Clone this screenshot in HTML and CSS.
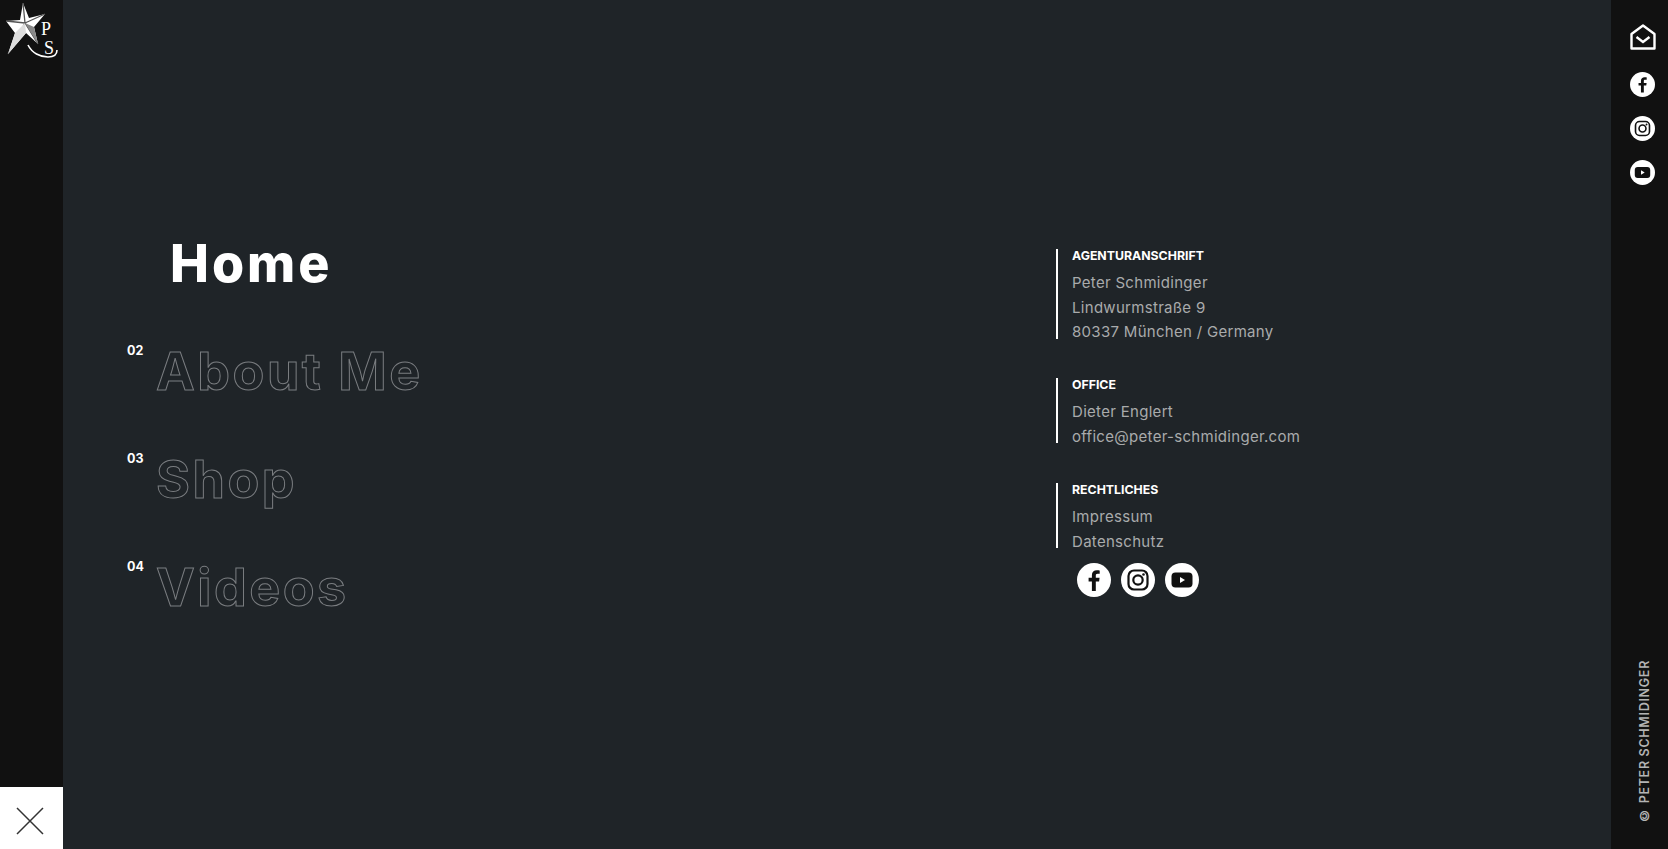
FILE: index.html
```html
<!DOCTYPE html>
<html lang="en">
  <head>
    <meta charset="UTF-8" />
    <meta name="viewport" content="width=device-width, initial-scale=1.0" />
    <title>Peter Schmidinger</title>
    <link rel="stylesheet" href="styles.css">
  </head>

  <body>
    <aside class="left-bar">
      <a class="logo" href="#">
        <svg width="60" height="60" viewBox="0 0 60 60">
          <polygon points="23,3 29,18 45,14 34,27 38,44 26,33 8,54 15,33 6,21 20,20" fill="#fff"/>
          <path d="M23 3l2 20M6 21l19 2M45 14L25 23M25 23L8 54M25 23l13 21" stroke="#555" stroke-width="1.300" fill="none"/>
          <polygon points="25,23 34,27 38,44" fill="#888"/>
          <polygon points="25,23 15,33 8,54 26,33" fill="#ddd"/>
          <text class="logo-letter" x="41" y="35">P</text>
          <text class="logo-letter" x="44" y="54">S</text>
          <path d="M28 45c4 8 12 12 20 12 6 0 9-3 9-7" fill="none" stroke="#fff" stroke-width="1.600"/>
        </svg>
      </a>
      <button class="close-btn">
        <svg width="28" height="28" viewBox="0 0 28 28">
          <path d="M1 1l26 26M27 1L1 27" stroke="#333" stroke-width="1.500" fill="none"/>
        </svg>
      </button>
    </aside>

    <main class="content">
      <nav class="menu">
        <a class="menu-item active" href="#"><span class="menu-text">Home</span></a>
        <a class="menu-item" href="#"><span class="menu-num">02</span><span class="menu-text">About Me</span></a>
        <a class="menu-item" href="#"><span class="menu-num">03</span><span class="menu-text">Shop</span></a>
        <a class="menu-item" href="#"><span class="menu-num">04</span><span class="menu-text">Videos</span></a>
      </nav>

      <section class="contact">
        <div class="contact-block">
          <h4>AGENTURANSCHRIFT</h4>
          <p>Peter Schmidinger</p>
          <p>Lindwurmstraße 9</p>
          <p>80337 München / Germany</p>
        </div>
        <div class="contact-block">
          <h4>OFFICE</h4>
          <p>Dieter Englert</p>
          <p>office@peter-schmidinger.com</p>
        </div>
        <div class="contact-block">
          <h4>RECHTLICHES</h4>
          <p>Impressum</p>
          <p>Datenschutz</p>
        </div>
        <div class="contact-social">
          <svg class="social-lg" viewBox="0 0 34 34"><use href="#ico-fb"/></svg>
          <svg class="social-lg" viewBox="0 0 34 34"><use href="#ico-ig"/></svg>
          <svg class="social-lg" viewBox="0 0 34 34"><use href="#ico-yt"/></svg>
        </div>
      </section>
    </main>

    <aside class="right-bar">
      <div class="right-icons">
        <svg class="mail" width="26" height="26" viewBox="0 0 26 26">
          <path d="M1.500 24.500V10L13 1.500 24.500 10V24.500Z" fill="none" stroke="#fff" stroke-width="2.400" stroke-linejoin="round"/>
          <path d="M6.500 13L13 18l6.500-5" fill="none" stroke="#fff" stroke-width="2.400"/>
        </svg>
        <svg class="social-sm" viewBox="0 0 34 34"><use href="#ico-fb"/></svg>
        <svg class="social-sm" viewBox="0 0 34 34"><use href="#ico-ig"/></svg>
        <svg class="social-sm" viewBox="0 0 34 34"><use href="#ico-yt"/></svg>
      </div>
      <span class="copyright">© PETER SCHMIDINGER</span>
    </aside>

    <svg class="icon-defs" width="0" height="0">
      <symbol id="ico-fb" viewBox="0 0 34 34">
        <circle cx="17" cy="17" r="17" fill="#fff"/>
        <path d="M18.800 28V18.500h3.300l.5-3.700h-3.800v-2.300c0-1.100.3-1.800 1.900-1.800h2V7.400c-.4 0-1.600-.2-2.900-.2-2.900 0-4.900 1.800-4.900 5v2.600h-3.300v3.700h3.300V28z" fill="#111"/>
      </symbol>
      <symbol id="ico-ig" viewBox="0 0 34 34">
        <circle cx="17" cy="17" r="17" fill="#fff"/>
        <rect x="7.500" y="7.500" width="19" height="19" rx="5.500" fill="none" stroke="#111" stroke-width="2.200"/>
        <circle cx="17" cy="17" r="4.700" fill="none" stroke="#111" stroke-width="2.200"/>
        <circle cx="22.500" cy="11.500" r="1.300" fill="#111"/>
      </symbol>
      <symbol id="ico-yt" viewBox="0 0 34 34">
        <circle cx="17" cy="17" r="17" fill="#fff"/>
        <rect x="6.500" y="9.500" width="21" height="15" rx="4" fill="#111"/>
        <path d="M15 14l5 3-5 3z" fill="#fff"/>
      </symbol>
    </svg>
  </body>
</html>
```

FILE: styles.css
```css
* {
  box-sizing: border-box;
}

html,
body {
  height: 100%;
}

body {
  display: flex;
  margin: 0;
  overflow: hidden;
  background: #1f2428;
  font-family: Inter, "Noto Sans", sans-serif;
}

.left-bar {
  display: flex;
  flex-direction: column;
  justify-content: space-between;
  flex: 0 0 63px;
  background: #111;
}

.logo {
  display: block;
  height: 60px;
}

.logo-letter {
  font-family: "Liberation Serif", serif;
  font-size: 18px;
  fill: #fff;
}

.close-btn {
  display: flex;
  align-items: center;
  justify-content: center;
  width: 63px;
  height: 62px;
  padding: 6px 3px 0 0;
  border: 0;
  background: #fff;
}

.content {
  display: flex;
  flex: 1;
  padding-top: 249px;
}

.menu {
  display: flex;
  flex-direction: column;
  flex: 0 0 993px;
  padding-left: 64px;
}

.menu-item {
  display: flex;
  align-items: flex-start;
  height: 108px;
  color: #fff;
  text-decoration: none;
}

.menu-item.active {
  height: 108px;
  margin-top: -20px;
  padding-left: 43px;
}

.menu-num {
  flex: 0 0 29px;
  margin-top: 6px;
  font-size: 12.500px;
  font-weight: 700;
}

.menu-text {
  font-size: 52px;
  font-weight: 700;
  letter-spacing: 2.500px;
  line-height: 70px;
  color: transparent;
  -webkit-text-stroke: 1px #7a7d80;
}

.active .menu-text {
  color: #fff;
  -webkit-text-stroke: 0;
  font-weight: 800;
  letter-spacing: 3px;
}

.contact {
  display: flex;
  flex-direction: column;
}

.contact-block {
  height: 90px;
  margin-bottom: 39px;
  padding-left: 14px;
  border-left: 2px solid #fff;
}

.contact-block:nth-child(2),
.contact-block:nth-child(3) {
  height: 65px;
}

.contact-block:nth-child(2) {
  margin-bottom: 40px;
}

.contact-block:nth-child(3) {
  margin-bottom: 15px;
}

.contact-block h4 {
  margin: 0 0 8px;
  font-size: 12.300px;
  font-weight: 700;
  line-height: 14px;
  color: #fff;
}

.contact-block p {
  margin: 0;
  font-size: 15px;
  line-height: 24.500px;
  letter-spacing: 0.300px;
  white-space: nowrap;
  color: #a9abac;
}

.contact-social {
  display: flex;
  gap: 10px;
  padding-left: 21px;
}

.social-lg {
  width: 34px;
  height: 34px;
}

.right-bar {
  display: flex;
  flex-direction: column;
  align-items: center;
  justify-content: space-between;
  flex: 0 0 57px;
  padding: 24px 0 26px 6px;
  background: #111;
}

.right-icons {
  display: flex;
  flex-direction: column;
  align-items: center;
  gap: 19px;
}

.social-sm {
  width: 25px;
  height: 25px;
}

.mail {
  margin-bottom: 3px;
}

.copyright {
  margin-left: 4px;
  writing-mode: vertical-rl;
  transform: rotate(180deg);
  font-size: 12.500px;
  font-weight: 600;
  letter-spacing: 0.700px;
  white-space: nowrap;
  color: #b4b4b4;
}

.icon-defs {
  position: absolute;
}
```
